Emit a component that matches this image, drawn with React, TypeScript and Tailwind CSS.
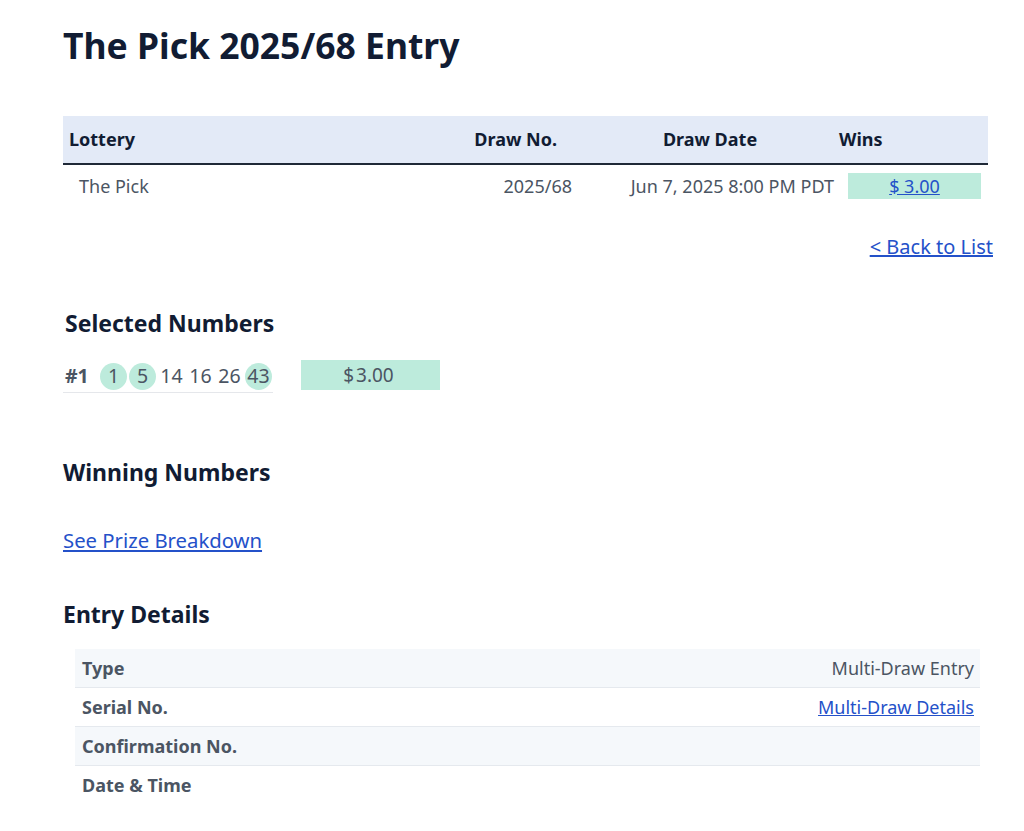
import React from "react";

const font = { fontFamily: '"Noto Sans", "Open Sans", sans-serif' };

function Ball({ n, hit }: { n: string; hit?: boolean }) {
  return (
    <span
      className={
        "flex h-[27px] w-[27px] items-center justify-center rounded-full " +
        (hit ? "bg-[#bdebdc]" : "")
      }
    >
      {n}
    </span>
  );
}

export default function App() {
  const details: [string, React.ReactNode][] = [
    ["Type", <span className="text-[#4b5563]">Multi-Draw Entry</span>],
    [
      "Serial No.",
      <a href="#" className="text-[#2451c9] underline">
        Multi-Draw Details
      </a>,
    ],
    ["Confirmation No.", null],
    ["Date & Time", null],
  ];
  return (
    <div className="min-h-[831px] w-[1024px] bg-white" style={font}>
      <div className="pl-[63px] pr-[36px] pt-[20px]">
        <h1 className="text-[35.5px] font-bold leading-[50px] text-[#111c33]">
          The Pick 2025/68 Entry
        </h1>

        {/* Table */}
        <div className="mt-[46px] w-[925px]">
          <div className="flex h-[49px] items-center border-b-2 border-[#1f2937] bg-[#e3eaf7] text-[18px] font-bold text-[#111c33]">
            <div className="w-[387px] pl-[6px]">Lottery</div>
            <div className="w-[130px] pr-[23px] text-right">Draw No.</div>
            <div className="w-[258px] pl-[2px] text-center">Draw Date</div>
            <div className="flex-1 pl-[1px]">Wins</div>
          </div>
          <div className="flex h-[42px] items-center text-[18px] text-[#4b5563]">
            <div className="w-[387px] pl-[16px]">The Pick</div>
            <div className="w-[130px] pr-[8px] text-right">2025/68</div>
            <div className="w-[258px] pr-[4px] text-right">Jun 7, 2025 8:00 PM PDT</div>
            <div className="flex-1 pl-[10px] pr-[7px]">
              <div className="flex h-[26px] items-center justify-center bg-[#bdebdc]">
                <a href="#" className="text-[#2451c9] underline">
                  $ 3.00
                </a>
              </div>
            </div>
          </div>
        </div>

        <div className="mt-[26px] flex justify-end">
          <a href="#" className="mr-[-5px] text-[20px] leading-[28px] text-[#2451c9] underline">
            &lt; Back to List
          </a>
        </div>

        <h2 className="mt-[47px] pl-[2px] text-[23px] font-bold leading-[30px] text-[#111c33]">
          Selected Numbers
        </h2>

        <div className="mt-[22px] flex items-start">
          <div className="flex h-[33px] w-[210px] items-center border-b border-[#e5e7eb] pl-[2px] text-[19.5px] text-[#4b5563]">
            <span className="w-[35px] font-bold">#1</span>
            <div className="flex gap-[2px]">
              <Ball n="1" hit />
              <Ball n="5" hit />
              <Ball n="14" />
              <Ball n="16" />
              <Ball n="26" />
              <Ball n="43" hit />
            </div>
          </div>
          <div className="ml-[28px] flex h-[30px] w-[139px] items-center justify-center bg-[#bdebdc] pr-[4px] text-[19px] text-[#4b5563]">
            $&#8202;3.00
          </div>
        </div>

        <h2 className="mt-[64px] text-[23px] font-bold leading-[30px] text-[#111c33]">
          Winning Numbers
        </h2>

        <a
          href="#"
          className="mt-[39px] block w-fit text-[20.3px] leading-[28px] text-[#2451c9] underline"
        >
          See Prize Breakdown
        </a>

        <h2 className="mt-[45px] text-[23px] font-bold leading-[30px] text-[#111c33]">
          Entry Details
        </h2>

        <div className="ml-[12px] mt-[20px] w-[905px]">
          {details.map(([label, value], i) => (
            <div
              key={label}
              className={
                "flex h-[39px] items-center justify-between border-b px-[7px] pt-[1px] text-[18px] " +
                (i % 2 === 0 ? "bg-[#f5f8fb]" : "bg-white") +
                (i === details.length - 1 ? " border-transparent" : " border-[#e5e9ee]")
              }
            >
              <span className="font-bold text-[#4b5563]">{label}</span>
              <span className="mr-[-1px]">{value}</span>
            </div>
          ))}
        </div>
      </div>
    </div>
  );
}
